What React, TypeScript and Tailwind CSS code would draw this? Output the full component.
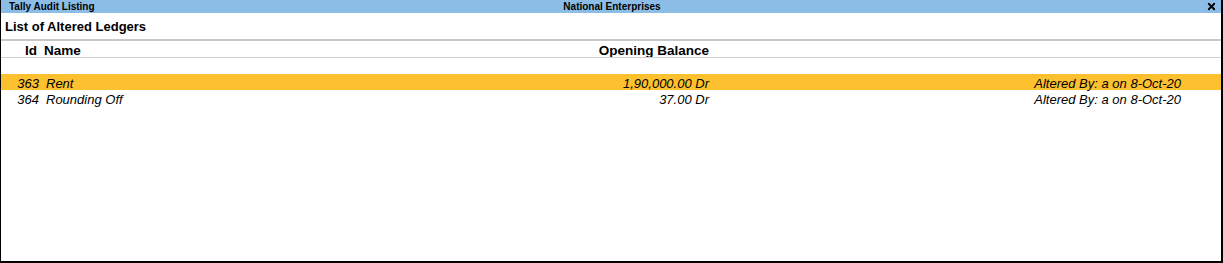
import { X } from 'lucide-react';

type Row = { id: number; name: string; balance: string; note: string };

const rows: Row[] = [
  { id: 363, name: 'Rent', balance: '1,90,000.00 Dr', note: 'Altered By: a on 8-Oct-20' },
  { id: 364, name: 'Rounding Off', balance: '37.00 Dr', note: 'Altered By: a on 8-Oct-20' },
];

// shared columns: id | name | balance | note
const cols = 'grid grid-cols-[38px_200px_470px_472px] items-center';

export default function App() {
  return (
    <div
      className="w-[1223px] h-[263px] bg-white border-l border-r-2 border-b-2 border-black flex flex-col text-black"
      style={{ fontFamily: '"Liberation Sans", Arial, sans-serif' }}
    >
      {/* title bar */}
      <div className="h-[13px] bg-[#8bbde6] grid grid-cols-[1fr_auto_1fr] items-center text-[10px] font-bold leading-none pl-2 pr-1">
        <span>Tally Audit Listing</span>
        <span className="pr-[2px]">National Enterprises</span>
        <span className="flex justify-end">
          <X size={11} strokeWidth={4} />
        </span>
      </div>

      <div className="h-[26px] flex items-center pl-1 pt-[2px] text-[13px] font-bold">List of Altered Ledgers</div>
      <div className="h-[2px] bg-[#c8c8c8]" />

      {/* column headers */}
      <div className={`${cols} h-[16px] text-[13.5px] font-bold`}>
        <span className="text-right pr-[2px]">Id</span>
        <span className="pl-[5px]">Name</span>
        <span className="text-right">Opening Balance</span>
        <span />
      </div>
      <div className="h-px bg-[#d0d0d0]" />

      <div className="h-[16px]" />

      {rows.map((r, i) => (
        <div key={r.id} className={`${cols} h-[16px] text-[13px] italic ${i === 0 ? 'bg-[#fdc02f]' : ''}`}>
          <span className="text-right">{r.id}</span>
          <span className="pl-[7px]">{r.name}</span>
          <span className="text-right">{r.balance}</span>
          <span className="text-right">{r.note}</span>
        </div>
      ))}
    </div>
  );
}
